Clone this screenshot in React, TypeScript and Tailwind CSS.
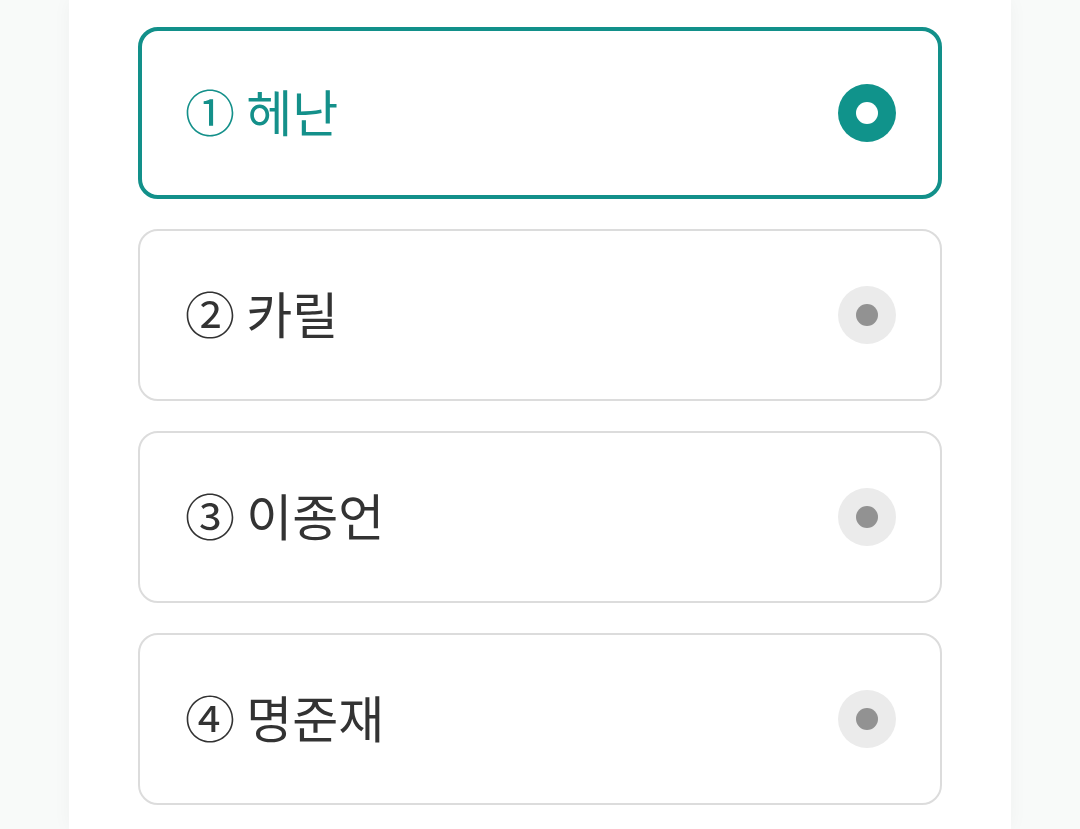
const options = [
  { no: "①", name: "헤난" },
  { no: "②", name: "카릴" },
  { no: "③", name: "이종언" },
  { no: "④", name: "명준재" },
];

const Radio = ({ checked }: { checked: boolean }) => {
  return (
    <div
      className={
        checked
          ? "w-[58px] h-[58px] rounded-full bg-[#10938b] flex items-center justify-center"
          : "w-[58px] h-[58px] rounded-full bg-[#ebebeb] flex items-center justify-center"
      }
    >
      <div
        className={
          checked
            ? "w-[22px] h-[22px] rounded-full bg-white"
            : "w-[22px] h-[22px] rounded-full bg-[#929292]"
        }
      />
    </div>
  );
};

export default function App() {
  const selected = 0;
  return (
    <div className="w-full h-[829px] bg-[#f8faf9] flex justify-center overflow-hidden">
      <div className="w-[942px] h-full bg-white px-[69px] pt-[27px] flex flex-col gap-[30px] shadow-[0_0_18px_rgba(0,0,0,0.04)]">
        {options.map((o, i) => {
          const on = i === selected;
          return (
            <div
              key={o.no}
              className={
                on
                  ? "h-[172px] shrink-0 rounded-[20px] border-[4px] border-[#12908a] flex items-center justify-between pl-[43px] pr-[42px]"
                  : "h-[172px] shrink-0 rounded-[20px] border-2 border-[#dcdcdc] flex items-center justify-between pl-[45px] pr-[44px]"
              }
            >
              <div
                className={
                  on
                    ? "text-[50px] text-[#14908a] font-['Noto_Sans_CJK_KR',sans-serif] leading-none pb-[6px]"
                    : "text-[50px] text-[#333333] font-['Noto_Sans_CJK_KR',sans-serif] leading-none pb-[6px]"
                }
              >
                {o.no} {o.name}
              </div>
              <Radio checked={on} />
            </div>
          );
        })}
      </div>
    </div>
  );
}
